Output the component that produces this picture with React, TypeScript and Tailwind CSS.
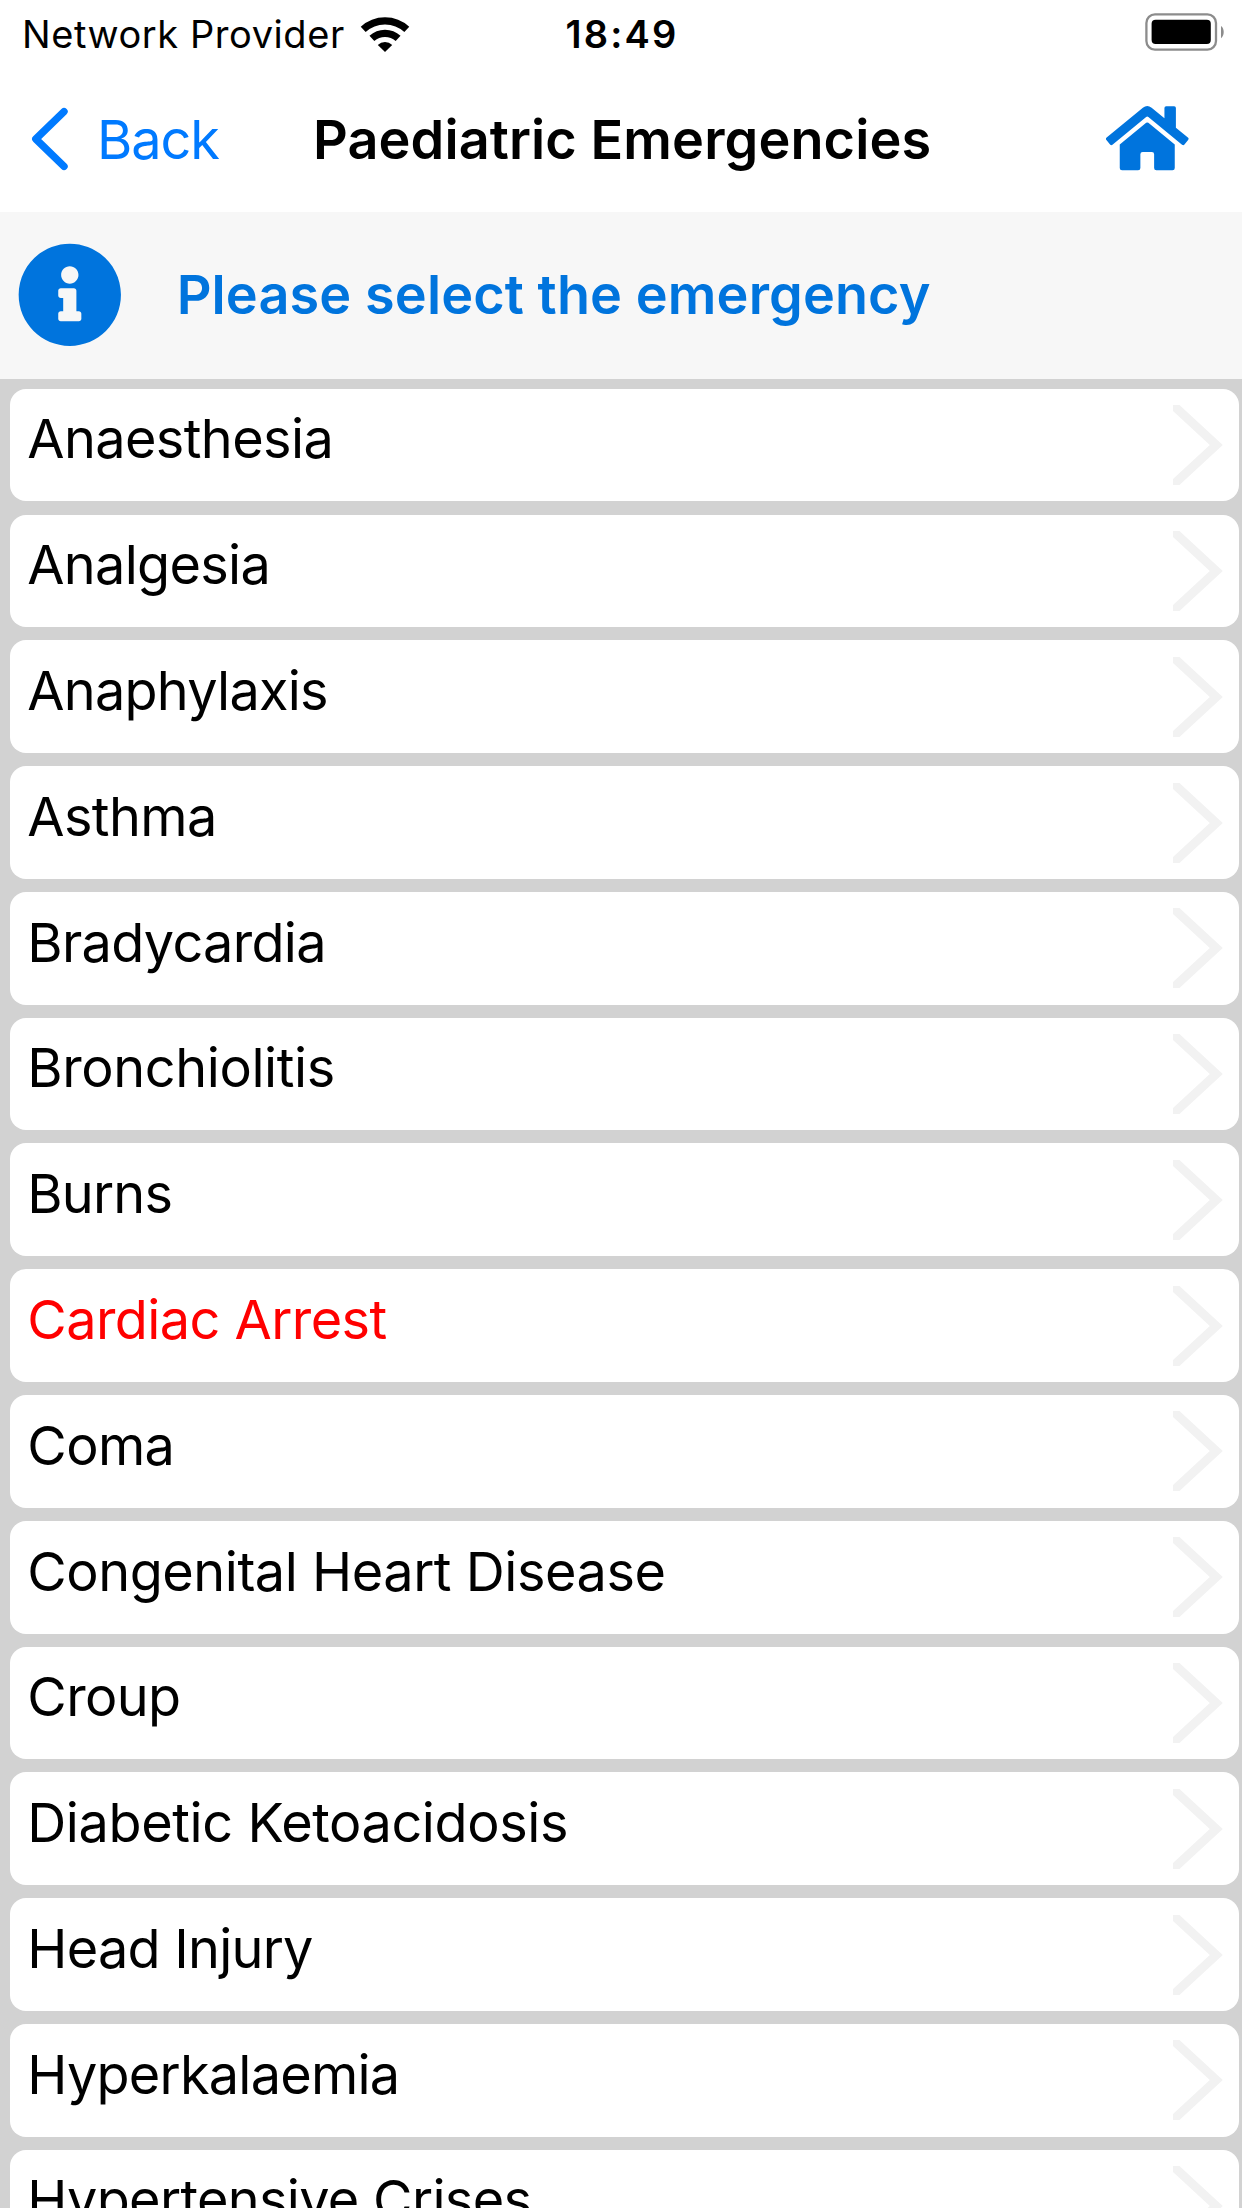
import { FaHome, FaInfoCircle } from "react-icons/fa";

type Emergency = { name: string; className?: string };

const emergencies: Emergency[] = [
  { name: "Anaesthesia" },
  { name: "Analgesia", className: "tracking-[-0.7px]" },
  { name: "Anaphylaxis", className: "tracking-[-0.75px]" },
  { name: "Asthma" },
  { name: "Bradycardia", className: "tracking-[-0.7px]" },
  { name: "Bronchiolitis", className: "tracking-[-0.4px]" },
  { name: "Burns", className: "tracking-[-0.8px]" },
  { name: "Cardiac Arrest", className: "text-[#ff0000] tracking-[-0.56px]" },
  { name: "Coma" },
  { name: "Congenital Heart Disease", className: "tracking-[-0.46px]" },
  { name: "Croup" },
  { name: "Diabetic Ketoacidosis", className: "tracking-[-0.4px]" },
  { name: "Head Injury", className: "tracking-[-0.75px]" },
  { name: "Hyperkalaemia", className: "tracking-[-0.77px]" },
  { name: "Hypertensive Crises", className: "tracking-[-0.67px]" },
];

function WifiIcon() {
  return (
    <svg className="ml-[15px] h-[38px] w-[50px]" viewBox="0 0 50 38" fill="none" stroke="#000" strokeWidth="7.2">
      <path d="M3.2 14.4 A32 32 0 0 1 46.8 14.4" />
      <path d="M11.9 23.4 A19.4 19.4 0 0 1 38.1 23.4" />
      <path d="M25 37 L17.8 30 A10.2 10.2 0 0 1 32.2 30 Z" fill="#000" stroke="none" />
    </svg>
  );
}

function BatteryIcon() {
  return (
    <svg className="h-[38px] w-[80px]" viewBox="0 0 80 38">
      <rect x="1.4" y="1.4" width="69.6" height="35.2" rx="8.6" fill="none" stroke="#8c8c8c" strokeWidth="2.3" />
      <rect x="6.6" y="6.8" width="59.2" height="24.2" rx="4" fill="#000" />
      <path d="M76 13 C79.6 15.4 79.6 22.8 76 25.2 Z" fill="#8c8c8c" />
    </svg>
  );
}

function StatusBar() {
  return (
    <div className="grid h-[68px] grid-cols-[1fr_auto_1fr] items-center text-[38px] leading-[68px]">
      <div className="flex items-center pl-[22px]">
        <span className="tracking-[0.57px]">Network Provider</span>
        <WifiIcon />
      </div>
      <span className="pl-[2px] font-semibold tracking-[2.2px]">18:49</span>
      <div className="flex justify-end pr-[17px] pb-[4px]">
        <BatteryIcon />
      </div>
    </div>
  );
}

function NavBar() {
  return (
    <div className="flex h-[144px] items-center pb-[2px] text-[54px] leading-[72px]">
      <button className="flex w-[313px] shrink-0 items-center pl-[29px] text-[#007aff]">
        <svg className="h-[64px] w-[40px]" viewBox="0 0 40 64" fill="none" stroke="currentColor" strokeWidth="7.4" strokeLinecap="round" strokeLinejoin="round">
          <path d="M35 4.6 L6.8 32 L35 59.4" />
        </svg>
        <span className="pt-[2px] pl-[28px] tracking-[-1.1px]">Back</span>
      </button>
      <h1 className="pt-[2px] font-semibold tracking-[0.11px] whitespace-nowrap">Paediatric Emergencies</h1>
      <FaHome className="mr-[53.5px] mb-[2px] ml-auto size-[82.5px] text-[#0074dd]" />
    </div>
  );
}

function Row({ name, className = "" }: Emergency) {
  return (
    <li className="flex h-[112.7px] shrink-0 items-start justify-between rounded-[16px] bg-white pr-[16px] pl-[17.3px]">
      <span className={`pt-[14.7px] ${className}`}>{name}</span>
      <svg className="mt-[16.4px] h-[80px] w-[50px]" viewBox="0 0 50 80" fill="none" stroke="#f2f2f2" strokeWidth="8.8">
        <path d="M-4 -3.7 L43.3 40 L-4 83.7" />
      </svg>
    </li>
  );
}

export default function App() {
  return (
    <div className="flex h-[2208px] w-full flex-col overflow-hidden bg-white font-['Inter',sans-serif] text-black">
      <header className="shrink-0">
        <StatusBar />
        <NavBar />
      </header>
      <section className="flex h-[167px] shrink-0 items-center bg-[#f7f7f7] pb-[2px] pl-[16.7px] text-[#0074dd]">
        <FaInfoCircle className="size-[105.6px]" />
        <h2 className="pl-[54.4px] text-[54px] leading-[72px] font-semibold tracking-[0.11px]">
          Please select the emergency
        </h2>
      </section>
      <ul className="flex min-h-0 flex-1 flex-col gap-[13.1px] overflow-hidden bg-[#d2d2d2] pt-[9.8px] pr-[3.4px] pl-[10px] text-[54px] leading-[72px] tracking-[-0.6px]">
        {emergencies.map((e) => (
          <Row key={e.name} {...e} />
        ))}
      </ul>
    </div>
  );
}
